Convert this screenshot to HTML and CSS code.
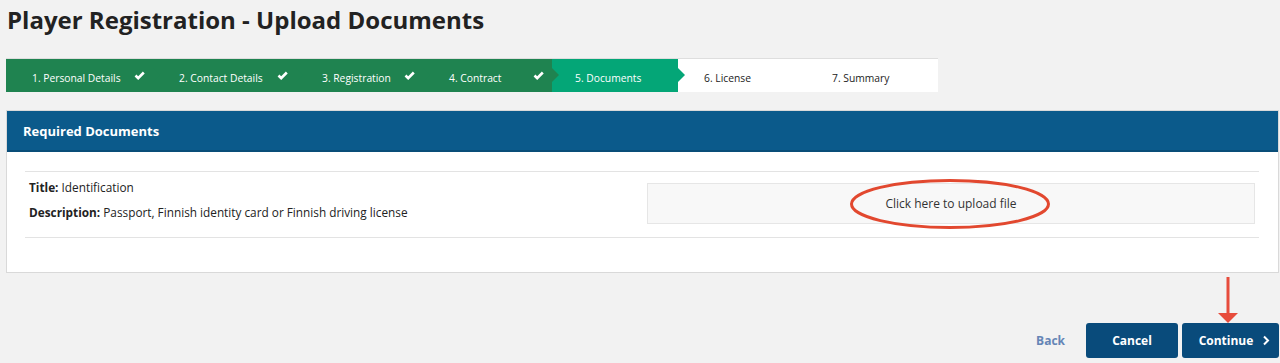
FILE: index.html
```html
<!DOCTYPE html>
<html lang="en">
  <head>
    <meta charset="UTF-8" />
    <meta name="viewport" content="width=device-width, initial-scale=1.0" />
    <title>Player Registration - Upload Documents</title>
    <link rel="stylesheet" href="styles.css">
  </head>
  <body>
    <div class="page">
      <h1>Player Registration - Upload Documents</h1>

      <ol class="steps">
        <li class="step done" style="width: 147px">
          <span>1. Personal Details</span>
          <svg class="check" width="11" height="9" viewBox="0 0 11 9"><polyline points="1.5,4.5 4.2,7.2 9.8,1.5" /></svg>
        </li>
        <li class="step done" style="width: 143px">
          <span>2. Contact Details</span>
          <svg class="check" width="11" height="9" viewBox="0 0 11 9"><polyline points="1.5,4.5 4.2,7.2 9.8,1.5" /></svg>
        </li>
        <li class="step done" style="width: 127px">
          <span>3. Registration</span>
          <svg class="check" width="11" height="9" viewBox="0 0 11 9"><polyline points="1.5,4.5 4.2,7.2 9.8,1.5" /></svg>
        </li>
        <li class="step done" style="width: 129px">
          <span>4. Contract</span>
          <svg class="check" width="11" height="9" viewBox="0 0 11 9"><polyline points="1.5,4.5 4.2,7.2 9.8,1.5" /></svg>
        </li>
        <li class="step active" style="width: 126px">
          <span>5. Documents</span>
        </li>
        <li class="step" style="width: 128px">
          <span>6. License</span>
        </li>
        <li class="step" style="width: 132px">
          <span>7. Summary</span>
        </li>
      </ol>

      <section class="panel">
        <header class="panel-head">Required Documents</header>
        <div class="panel-body">
          <div class="doc-row">
            <div class="doc-info">
              <p><b>Title:</b> Identification</p>
              <p><b>Description:</b> Passport, Finnish identity card or Finnish driving license</p>
            </div>
            <div class="upload">
              Click here to upload file
              <svg class="mark-ring" width="206" height="54" viewBox="0 0 206 54">
                <ellipse cx="101" cy="27" rx="98.5" ry="23.5" />
              </svg>
            </div>
          </div>
        </div>
      </section>

      <div class="actions">
        <a class="back" href="#">Back</a>
        <button class="btn">Cancel</button>
        <button class="btn">
          Continue
          <svg width="8" height="11" viewBox="0 0 8 11"><polyline points="2,1.5 6,5.5 2,9.5" /></svg>
        </button>
        <svg class="mark-arrow" width="22" height="48" viewBox="0 0 22 48">
          <line x1="11" y1="0" x2="11" y2="37" />
          <polygon points="1,36 21,36 11,46" />
        </svg>
      </div>
    </div>
  </body>
</html>
```

FILE: styles.css
```css
*,
*::before,
*::after {
  box-sizing: border-box;
  margin: 0;
  padding: 0;
}
body {
  background-color: #f2f2f2;
  font-family: "Open Sans", "Noto Sans", sans-serif;
  color: #222;
}
.page {
  padding: 0 1px 0 6px;
}
h1 {
  font-size: 24px;
  font-weight: 700;
  line-height: 40px;
  color: #222;
  padding-left: 1px;
}

.steps {
  list-style: none;
  display: flex;
  margin-top: 18px;
  width: 932px;
  height: 34px;
  background-color: #fff;
  border-top: 1px solid #dedede;
}
.step {
  position: relative;
  display: flex;
  align-items: center;
  justify-content: space-between;
  padding: 0 8px 0 26px;
  font-size: 10.3px;
  color: #222;
}
.step span {
  padding-top: 4px;
}
.step.done {
  background-color: #1f8350;
  color: #fff;
}
.step.active {
  background-color: #04a677;
  color: #fff;
  padding-left: 23px;
}
.step.done::after,
.step.active::after {
  content: "";
  position: absolute;
  right: -7px;
  top: 9px;
  z-index: 1;
  border-top: 7.5px solid transparent;
  border-bottom: 7.5px solid transparent;
  border-left: 7px solid #1f8350;
}
.step.active::after {
  border-left-color: #04a677;
}
.check {
  margin-top: -1px;
}
.check polyline {
  fill: none;
  stroke: #fff;
  stroke-width: 2.6;
}

.panel {
  margin-top: 18px;
  background-color: #fff;
  border: 1px solid #d9d9d9;
}
.panel-head {
  height: 41px;
  padding-left: 16px;
  display: flex;
  align-items: center;
  background-color: #0b5a8b;
  border-bottom: 2px solid #094d78;
  color: #fff;
  font-size: 13px;
  font-weight: 700;
}
.panel-body {
  padding: 19px 19px 34px 18px;
}
.doc-row {
  display: grid;
  grid-template-columns: 1fr 1fr;
  gap: 10px;
  padding: 6px 4px 13px;
  border-top: 1px solid #e3e3e3;
  border-bottom: 1px solid #e3e3e3;
}
.doc-info p {
  font-size: 11.8px;
  line-height: 18px;
  color: #222;
}
.doc-info p + p {
  margin-top: 7px;
}
.doc-info b {
  font-weight: 700;
}
.upload {
  position: relative;
  margin-top: 5px;
  height: 41px;
  display: flex;
  align-items: center;
  justify-content: center;
  background-color: #f8f8f8;
  border: 1px solid #e6e6e6;
  font-size: 12px;
  color: #333;
}
.mark-ring {
  position: absolute;
  left: 201px;
  top: -7px;
}
.mark-ring ellipse {
  fill: none;
  stroke: #e2482f;
  stroke-width: 3;
}

.actions {
  position: relative;
  display: flex;
  justify-content: flex-end;
  align-items: center;
  gap: 4px;
  margin-top: 50px;
}
.back {
  margin-right: 17px;
  font-size: 12px;
  font-weight: 700;
  color: #6585b6;
  text-decoration: none;
}
.btn {
  display: flex;
  align-items: center;
  justify-content: center;
  gap: 9px;
  height: 35px;
  width: 92px;
  border: 0;
  border-radius: 3px;
  background-color: #094b7b;
  color: #fff;
  font-family: inherit;
  font-size: 12px;
  font-weight: 700;
}
.btn + .btn {
  width: 97px;
  padding-left: 8px;
}
.btn polyline {
  fill: none;
  stroke: #fff;
  stroke-width: 2;
}
.mark-arrow {
  position: absolute;
  right: 40px;
  top: -46px;
}
.mark-arrow line {
  stroke: #e74c3c;
  stroke-width: 3;
}
.mark-arrow polygon {
  fill: #e74c3c;
}
```
